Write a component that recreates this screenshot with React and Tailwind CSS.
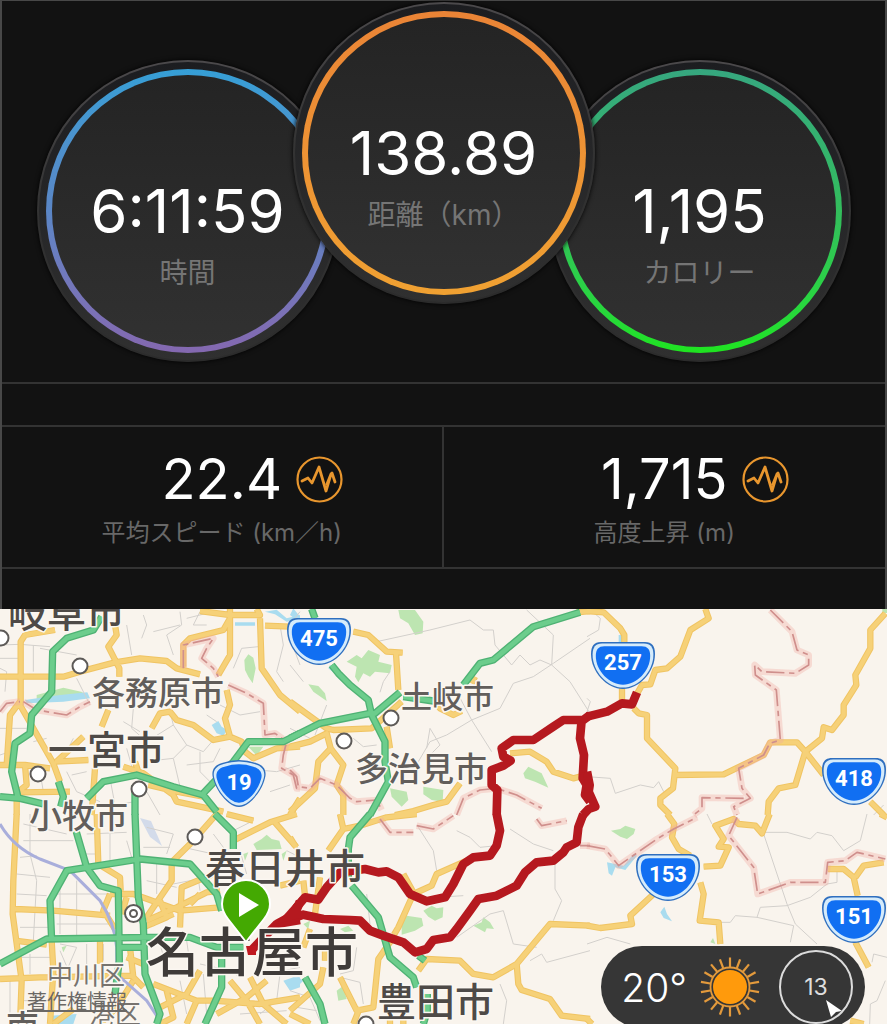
import React from "react";

const DIALS = [
  {
    value: "6:11:59",
    label: "時間",
    ring: "from-[#359fd6] via-[#5a86c6] to-[#8468b0]",
    place: "mt-[58px]",
  },
  {
    value: "138.89",
    label: "距離（km）",
    ring: "from-[#ea8436] to-[#f0a132]",
    place: "z-10 -mx-[46px]",
  },
  {
    value: "1,195",
    label: "カロリー",
    ring: "from-[#36a77f] via-[#33bd5c] to-[#1fe41f]",
    place: "mt-[58px]",
  },
];

const STATS = [
  { value: "22.4", label: "平均スピード (km／h)" },
  { value: "1,715", label: "高度上昇 (m)" },
];

/* Each tile holds its own drawing space of 900 x 630 units, three units to a map unit. */
const TILES = [
  {
    x: 0,
    y: 605,
    minor:
      "M0 120L60 118L150 125M0 160H60M15 260L20 200L0 190M100 120V200M380 60L395 150M430 30L440 60L425 100M540 20L545 60L500 90L520 150M600 20L580 60L620 60M560 40L640 20M700 190L725 130L775 125M840 60L850 120L830 200L850 230M870 100L900 180M400 310L395 370L440 410L520 360L560 420L610 440L640 405M370 350L420 380M520 360L510 320M440 410L430 470L520 460L560 420M520 460L540 545M560 480L640 470L660 430M600 440V500L640 540M200 500L230 560L300 590M215 510L260 500M0 370H80M120 500L130 560M100 410L140 400M660 300L720 330L780 320M620 330L650 350M330 520L345 600L405 590M440 560L480 630M220 400L200 440M0 450L30 440M230 220L270 300M720 490L830 500L900 480M810 560L870 540M380 430L400 500M120 130L230 150M460 80L540 60",
    green:
      "M733 165L745 148L760 158L767 190L758 235L745 215L735 195ZM110 270L190 248L250 262L200 282L110 285ZM745 425H790L770 452Z",
    water:
      "M75 285L180 270L262 262L270 280L190 290L80 295ZM635 360L655 348L665 365L682 375L670 392L650 385ZM705 52H765V62H705ZM795 20L830 14L860 40L900 30V42L860 50L825 28Z",
    yellow:
      "M0 215H60L190 215L240 200L345 172L420 160L500 168L530 190L600 208M165 75L75 90L62 110V300M60 290L30 330L20 480M60 300L160 475L180 530M345 60L350 90L325 125L358 190V215M325 315L305 365M550 185V120L570 100L670 75L690 40V12M600 18L690 30L780 30L770 12M690 40V150L655 210M780 40L785 190L840 270L900 320M795 62L870 65M680 255L690 300L675 340L690 395M455 370L480 325L510 320L530 345L580 360L640 405L690 395L725 410L735 440L760 460L830 430L900 425M0 480H75L150 490M75 480L80 540L55 560M165 470L265 465M170 470L250 395M50 560V630M285 490L275 630M60 562L210 560M370 485L430 505L520 570L530 590L600 605L670 620M445 540L530 560L610 575M870 630L900 580M405 470L415 500",
    highway:
      "M305 35L280 75L200 100L158 140L155 260L95 330L90 385L45 415L35 500L55 580M0 575L60 580L130 597M175 530L190 575L182 605M260 580L310 530L410 510L520 545L610 570L650 620M405 540V630M610 565L700 470L745 410L850 410L900 385",
    border:
      "M0 320L20 295L60 290M70 290L110 315L200 330L240 305L270 290M550 190V120L640 100L620 130L605 160L640 190L655 215M685 240L740 265L790 295L795 390L825 385L860 410L850 450L845 490L880 510L890 550H900",
  },
  {
    x: 290,
    y: 605,
    minor:
      "M260 110L420 75L540 45L580 75H610L615 120L640 150L665 180L690 150L720 180L750 165L785 180M710 15L790 90L785 180L840 230L900 325M900 100L790 175L730 215L670 235L630 310L545 345L500 260M545 345L470 390L420 410L385 470M545 345L605 440M410 430L420 370L450 420L425 445M300 200L280 230L270 262M0 180L40 230M110 300L75 390M190 400L220 425L260 420M0 370L60 400M0 60L30 20",
    green:
      "M325 15H375L400 50L398 85L375 90L355 55L330 40ZM170 170L200 150L215 160L235 135L270 150L265 170L305 180L300 205L255 200L240 215L220 205L205 232L195 215L200 185ZM55 238L85 243L105 265L110 288L70 260ZM700 505L715 485L735 495L755 505L775 548L735 530L705 520ZM300 550L350 560L355 585L335 605L305 575ZM400 545L460 555L458 590L425 585L400 568Z",
    water: "M10 10L30 35L20 45L0 30ZM120 180L150 205L142 212L115 190Z",
    yellow:
      "M190 80L235 90L290 140L338 143M318 145L325 255M0 290L110 370L130 375L245 370L335 290M0 425L60 410L110 385L122 430L85 470L75 550L0 620M122 430L160 480L140 540L160 570V630M290 365L300 430M430 285L450 310L490 330L515 318M545 235L555 215M510 535L470 590L430 600L370 618L315 630M660 445L720 440L770 470L790 500L850 520L870 515M860 22L900 18",
    highway:
      "M65 12L75 40M125 180L145 205L180 240L235 285L245 330L285 410V470L295 530L240 630M0 400L90 355L240 325L255 325L330 262M340 275L430 288M520 240L570 175L610 165L730 65L870 22",
    border:
      "M0 495L20 515L25 545L60 550L90 520L140 540L180 580L200 590L260 585L275 615M500 630L520 580L570 555L620 550L680 570L755 610",
    route:
      "M900 330L880 345L820 345L790 365L730 405L670 405L635 430L640 455L662 467L640 482L605 495V540L622 555L620 630M875 345L870 400L882 450L878 520L890 540L885 570L900 590",
  },
  {
    x: 587,
    y: 605,
    minor: "M0 515L70 520L85 565L160 540L200 548L215 530L230 560M0 95L35 75L40 40L10 15M0 320L10 290L0 280M860 630L890 600",
    green: "M886 12H900V24H886Z",
    water: "M95 90H106V112H95Z",
    yellow:
      "M0 18L50 22L100 70L112 90V120M355 12L365 40L310 75L280 155L240 190L205 195L190 238L165 240L145 275M105 250V285M140 310L155 325L180 330V400L265 490L258 550L220 580V600L250 630M260 510L410 508L530 450L550 412H630L655 440L710 510M895 25L850 75V130L805 210L808 240L770 300V330L735 375L710 367L705 400L655 440L625 540L575 550L545 590L542 630M850 590L890 630",
    highway: "",
    border:
      "M550 15L615 80L630 135L665 150V180L625 205L525 200L503 180L505 210L568 255L580 405L548 415L530 450L455 490L465 550L490 580L440 605L450 630M470 580L345 578V610L320 630",
    route: "M0 335L60 320L105 295L135 298L150 262M0 500L8 540L5 560L25 605L5 612L-12 630",
  },
  {
    x: 0,
    y: 814,
    minor:
      "M70 30L200 60M70 80H220M60 130L110 125M50 180L150 190M50 240L140 245M90 0V120L110 200L100 380M180 200V360M230 200V370M170 240H330M170 330H340M60 340H150M260 60L380 55M330 60V140M440 40L520 60L500 120M430 100H510M470 150V240M590 160L600 230M520 210L620 190M640 60L700 140M720 110L740 180M760 20L700 50M180 390L230 400L200 470M180 410L210 480M60 430H150M70 560H150M30 500V600M480 390L500 460M560 380L570 450M600 450L690 470L720 490M610 480L620 600M840 480L830 560L780 600M540 500L560 600M860 110L900 130M260 390V450M310 390V440M90 420V480M440 200L530 220M380 80L395 130M240 120H300M550 100L640 120M800 440L850 470L900 460M720 600L860 590",
    green:
      "M760 90L785 75L800 62L815 75L838 80L845 105L770 108ZM730 120L745 115L735 140ZM845 120L860 110L850 140ZM185 400L200 395L190 415Z",
    water: "M850 500L880 490L900 490V520L870 530ZM150 605L230 600L220 630H150Z",
    yellow:
      "M50 0L40 200L38 300L65 500L60 630M0 495L120 490L400 485M45 285L160 290L330 305M45 380L140 392M155 380L160 470L150 630M290 0L295 150L360 190L362 230M650 0L580 80L515 145V200L460 280L440 310M540 340L545 220L640 180M330 240L400 240L540 290L660 280M330 240L310 290L345 345M380 250L365 300M440 320L530 280L620 235L660 230M430 340L500 310L480 260M300 370V450M455 330L520 300M570 270L600 240M700 80L810 25L890 0M680 0L760 20M820 20L890 100M840 215L900 200M390 400L400 490L430 520M400 500L350 580L300 630M460 510L590 560L640 560L780 570L900 550M480 580L560 540L600 470M590 560L560 630M690 500L740 560L780 630M750 490L790 570L860 630M650 600L740 550L800 500M160 630L220 585M500 530L520 610L480 630M380 430L430 450",
    highway:
      "M645 0L700 55V105M228 50L260 160L300 215L355 230L358 440L345 540M405 0L415 250L430 330L435 480L480 600L470 630M0 450L140 375L440 370H570L650 400H730M155 380L150 260L200 170L420 135L570 150L650 240L665 290M358 400H430M665 435V520L615 630",
    border: "",
    rail: "M0 30Q40 100 120 135L210 170L300 260Q345 330 350 400V480L440 560L480 620",
    route: "M900 262L885 300L900 305M753 410L830 330L900 318M885 300L830 330",
  },
  {
    x: 290,
    y: 814,
    minor:
      "M385 40L430 110L440 170M500 50L540 70L570 100L620 95M660 45L730 90L790 110M795 150V225L815 260L790 320M600 300L640 290L670 390L740 400M720 440L755 420L770 445L900 410M630 510L650 560L640 630M520 245L440 250M150 490L210 505L220 570M0 70L30 110M200 400L190 470L150 480M230 240L240 330M0 530L60 550L90 620M20 580L80 590M500 370L600 300",
    green:
      "M335 325L350 305L395 312L400 335L375 350L335 362ZM400 290L425 275L440 283L460 280L458 310L435 320L415 308ZM550 335L575 325L580 310L600 325L612 345L590 343L585 355ZM140 530L160 515L170 555L145 560ZM150 345L175 335L190 350L165 355ZM40 330L60 320L55 345Z",
    water: "M0 500L25 490L40 500L20 520L0 525Z",
    yellow:
      "M150 0L160 45L115 110M160 45L210 35L290 10L380 0M340 180L370 235M530 140L440 180L425 215L370 240L325 340L312 362M385 470L410 435L510 440L550 480L610 490L680 450L780 330L900 335M680 450L685 510L695 528L780 555L815 605L900 615M310 370L265 435L250 580L200 590L150 490M210 580L190 630M300 630V600M340 590V630M40 200L45 245M90 190L75 300M60 345L40 400M100 460L90 510L0 590M0 600L60 630M0 70L15 95M105 400V440",
    highway:
      "M240 0L180 70L175 105V190M185 215L265 310L300 430L370 490L380 520M385 425L405 440M45 490L90 570L105 630M412 540V590L400 630",
    border:
      "M740 15L755 35L830 20M270 15L300 55H370M380 35L430 45L490 5M870 95H900",
    route:
      "M620 0L630 50L620 95L600 125L550 130L520 150L490 210L465 250L410 262L360 240L325 190L290 172L265 175L225 165L150 175L110 220L85 257L45 250L20 280L0 322M880 0L865 40L860 85L830 100L820 115L790 140L740 145L705 175L680 215L620 245L565 255L540 290L500 345L480 370L430 378L410 405L375 415L340 385L280 365L240 350L210 320L180 318L100 315L40 302L0 316",
  },
  {
    x: 587,
    y: 814,
    minor:
      "M360 0L375 30M530 55L600 55L670 75L690 55L735 65L770 110L820 80L840 0M530 60L600 270L625 330L690 390M510 310L520 280L600 275L670 250L720 210L750 205V170M400 325L430 325L445 305L510 310L620 335L610 385M0 390L60 370L130 390M855 445L860 420L900 430M895 500L870 560L850 570L848 630",
    green: "M72 50L100 45L115 35L145 45L140 60L120 75L100 68ZM370 385L378 372L385 390Z",
    water: "M60 145L85 150L110 155L140 120L150 125L115 168L85 160L75 185L65 178ZM220 295L232 278L240 300L255 322L230 312Z",
    yellow:
      "M240 0L262 30L255 70L275 105L310 125M350 158L400 155L425 100L395 98L410 75L385 35L440 15L455 30L505 35L525 58L548 0M340 205L350 240L338 320L395 325L400 390M0 335L40 342L135 330L130 305L200 240M722 165H770L800 190L812 245M890 145L830 155L805 190M805 385L845 460M880 0L900 10M0 615L15 630M790 620L830 630",
    highway: "",
    border:
      "M0 95L55 105L95 155L210 75L260 45L330 10M450 10L425 65L500 160L512 240L610 205H715L722 145L775 140L810 115L895 135",
  },
];

const PLACES = [
  { name: "岐阜市", x: 8, y: 627, style: "text-[39px] font-medium fill-[#4e4a47]" },
  { name: "各務原市", x: 92, y: 705, style: "text-[33px] font-medium fill-[#625e5b]" },
  { name: "一宮市", x: 48, y: 764, style: "text-[39px] font-medium fill-[#4e4a47]" },
  { name: "小牧市", x: 29, y: 828, style: "text-[33px] font-medium fill-[#625e5b]" },
  { name: "土岐市", x: 401, y: 708, style: "text-[31px] font-medium fill-[#625e5b]" },
  { name: "多治見市", x: 355, y: 781, style: "text-[33px] font-medium fill-[#625e5b]" },
  { name: "春日井市", x: 205, y: 883, style: "text-[40px] font-medium fill-[#4e4a47]" },
  { name: "名古屋市", x: 146, y: 972, style: "text-[53px] font-medium fill-[#3f3b39]" },
  { name: "豊田市", x: 377, y: 1016, style: "text-[39px] font-medium fill-[#4e4a47]" },
  { name: "中川区", x: 47, y: 985, style: "text-[26px] font-normal fill-[#77736f]" },
  { name: "港区", x: 89, y: 1024, style: "text-[26px] font-normal fill-[#77736f]" },
  { name: "南", x: 6, y: 1039, style: "text-[33px] font-medium fill-[#625e5b]" },
];

const STATIONS = [
  [1, 638],
  [80, 666],
  [38, 774],
  [139, 789],
  [391, 718],
  [344, 741],
  [195, 837],
  [366, 1024],
];

const ROUTES = [
  { no: "475", x: 319, y: 641 },
  { no: "257", x: 623, y: 665 },
  { no: "19", x: 239, y: 784, small: true },
  { no: "418", x: 854, y: 781 },
  { no: "153", x: 668, y: 877 },
  { no: "151", x: 854, y: 919 },
];

const WIDE_SHIELD =
  "M-22 -23H22C29 -23 32 -19 32 -11C32 7 16 24 0 24C-16 24 -32 7 -32 -11C-32 -19 -29 -23 -22 -23Z";
const NARROW_SHIELD =
  "M-17 -21Q0 -27 17 -21C25 -19 28 -13 26 -6C23 6 16 14 10 19Q0 27 -10 19C-16 14 -23 6 -26 -6C-28 -13 -25 -19 -17 -21Z";

function Dial({ value, label, ring, place }) {
  return (
    <div
      className={`relative shrink-0 rounded-full bg-gradient-to-b from-[#4b494b] via-[#333] to-[#2b2b2b] p-[2px] shadow-[0_0_5px_#000] ${place}`}
    >
      <div className="rounded-full bg-gradient-to-b from-[#1c1d20] to-[#303030] p-[7px]">
        <div className={`rounded-full bg-gradient-to-b p-[6px] ${ring}`}>
          <div className="grid size-[272px] grid-rows-[1fr_auto_1fr] justify-items-center rounded-full bg-gradient-to-b from-[#242424] to-[#313131]">
            <p className="row-start-2 text-[60px] leading-[60px] text-white">{value}</p>
            <p className="row-start-3 pt-[18px] text-[28px] leading-[28px] whitespace-nowrap text-[#757575]">{label}</p>
          </div>
        </div>
      </div>
    </div>
  );
}

function ChartButton({ label }) {
  return (
    <button type="button" aria-label={label} className="ml-[14px] size-[47px] justify-self-start">
      <svg viewBox="0 0 47 47" className="size-full fill-none stroke-[#e8962e]">
        <circle cx="23.500" cy="23.500" r="22" strokeWidth="2.200" />
        <path
          d="M6 25L12 22L16 27L23 11L30 35L35 18L36 17L39 26M35 18L31 28"
          strokeWidth="2.800"
          strokeLinejoin="round"
          strokeLinecap="round"
        />
      </svg>
    </button>
  );
}

function Layer({ name, className, width, dash }) {
  return TILES.map((t) =>
    t[name] ? (
      <path
        key={`${t.x}-${t.y}`}
        d={t[name]}
        transform={`translate(${t.x} ${t.y}) scale(0.33333)`}
        className={className}
        strokeWidth={width}
        strokeDasharray={dash}
        strokeLinejoin="round"
      />
    ) : null
  );
}

function Shield({ no, x, y, small }) {
  const d = small ? NARROW_SHIELD : WIDE_SHIELD;
  return (
    <g transform={`translate(${x} ${y})`}>
      <path d={d} className="fill-[#2f6fbf]" />
      <path d={d} transform="scale(0.95 0.94)" className="fill-[#d5ebfb]" />
      <path d={d} transform="scale(0.85 0.82)" className="fill-[#116ff2]" />
      <text textAnchor="middle" y={small ? 6 : 5} className="fill-white font-[Roboto,sans-serif] text-[22px] font-bold">
        {no}
      </text>
    </g>
  );
}

function RouteMap() {
  return (
    <svg viewBox="0 609 887 415" className="block w-full bg-[#f9f4ed]" role="img" aria-label="ルート">
      <Layer name="green" className="fill-[#bde5b1]" />
      <Layer name="water" className="fill-[#a9dcef]" />
      <path d="M140 818L151 821L162 846L150 837Z" className="fill-[#d3dbea]" />
      <Layer name="minor" className="fill-none stroke-[#d3d0cc]" width={3} />
      <Layer name="yellow" className="fill-none stroke-[#f0c463]" width={19} />
      <Layer name="yellow" className="fill-none stroke-[#f6d178]" width={13} />
      <Layer name="border" className="fill-none stroke-[#f0a8a0]/35" width={20} />
      <Layer name="border" className="fill-none stroke-[#cf8f8c]" width={5} dash="55 14 16 14" />
      <Layer name="rail" className="fill-none stroke-[#a9aedb]" width={9} />
      <Layer name="highway" className="fill-none stroke-[#4fb274]" width={22} />
      <Layer name="highway" className="fill-none stroke-[#6ccd8c]" width={14} />
      <Layer name="route" className="fill-none stroke-[#b5191f]" width={26} />
      <path d="M276 924L300 897V918Z" className="fill-[#b5191f]" />

      {STATIONS.map(([cx, cy]) => (
        <circle key={`${cx}-${cy}`} cx={cx} cy={cy} r="7.500" className="fill-white stroke-[#5d5a58]" strokeWidth="2" />
      ))}
      <g className="fill-white stroke-[#5d5a58]" strokeWidth="2">
        <circle cx="133.500" cy="913.500" r="8.500" />
        <circle cx="133.500" cy="913.500" r="3.500" />
      </g>

      {PLACES.map((p) => (
        <text
          key={p.name}
          x={p.x}
          y={p.y}
          stroke="#fbf7f1"
          strokeWidth="3"
          strokeLinejoin="round"
          paintOrder="stroke"
          className={p.style}
        >
          {p.name}
        </text>
      ))}

      {ROUTES.map((r) => (
        <Shield key={r.no} {...r} />
      ))}

      <path d="M246 946H256V955H248Z" className="fill-[#c01820]" />
      <path
        d="M246 942L228 919C224 914 222 909 222 904A24 24 0 0 1 270 904C270 909 268 914 264 919Z"
        className="fill-[#44a902] stroke-white"
        strokeWidth="2"
        strokeLinejoin="round"
      />
      <path d="M239 893L259 905L239 917Z" className="fill-white" />
    </svg>
  );
}

function Sun() {
  const rays = Array.from({ length: 18 }, (_, i) => i * 20);
  return (
    <svg viewBox="-30 -30 60 60" className="size-[60px]" role="img" aria-label="晴れ">
      <circle r="17" className="fill-[#ff9a0c]" />
      <circle r="19.500" className="fill-none stroke-[#e39a3c]" strokeWidth="1.800" />
      {rays.map((a) => (
        <path key={a} d="M0 -20V-29.500" transform={`rotate(${a})`} className="stroke-[#e39a3c]" strokeWidth="2.200" />
      ))}
    </svg>
  );
}

function WindDial() {
  return (
    <div className="relative flex size-[74px] items-center justify-center rounded-full border-2 border-[#dcdcdc]">
      <span className="text-[23px] leading-none text-[#dedede]">13</span>
      <svg viewBox="0 0 18 18" className="absolute right-2 bottom-1 size-[18px]" aria-hidden="true">
        <path d="M1 0L17 11L11 12L6 17Z" className="fill-white" />
      </svg>
    </div>
  );
}

export default function App() {
  return (
    <main className="w-full overflow-hidden bg-[#121212] font-[Inter,'Noto_Sans_CJK_JP',sans-serif]">
      <div className="border-x-2 border-t border-[#484848] pb-10">
        <section className="flex items-start justify-center border-b-2 border-[#333] pt-px pb-5">
          {DIALS.map((d) => (
            <Dial key={d.label} {...d} />
          ))}
        </section>

        <section className="mt-[41px] grid grid-cols-2 border-y-2 border-[#333]">
          {STATS.map((s, i) => (
            <div key={s.label} className={`pt-6 pb-5 ${i ? "" : "border-r-2 border-[#333]"}`}>
              <div className="grid grid-cols-[1fr_auto_1fr] items-center">
                <p className="col-start-2 text-[56px] leading-[56px] text-white">{s.value}</p>
                <ChartButton label={s.label} />
              </div>
              <p className="pt-3 text-center text-[24px] leading-[28px] text-[#686868]">{s.label}</p>
            </div>
          ))}
        </section>
      </div>

      <section className="relative overflow-hidden">
        <RouteMap />
        <a href="#legal" className="absolute bottom-2 left-[27px] text-[20px] leading-[28px] text-[#6b6865] underline">
          著作権情報
        </a>
        <div className="absolute right-[22px] -bottom-1 flex h-[82px] items-center rounded-full bg-[#363636] pr-3 pl-5">
          <span className="text-[39px] leading-none font-light text-white">20°</span>
          <span className="mr-[19px] ml-[13px]">
            <Sun />
          </span>
          <WindDial />
        </div>
      </section>
    </main>
  );
}
